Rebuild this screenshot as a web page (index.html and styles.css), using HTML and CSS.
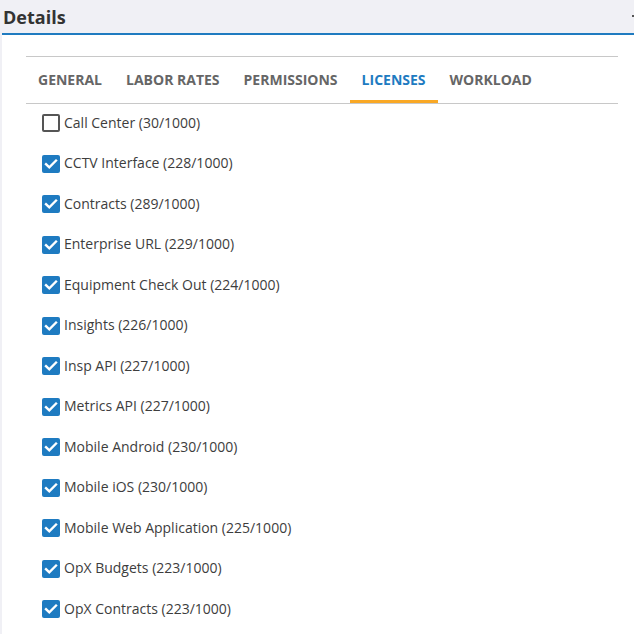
FILE: index.html
```html
<!DOCTYPE html>
<html>
<head>
<meta charset="utf-8">
<link rel="stylesheet" href="styles.css">
</head>
<body>
<div class="header">
  <h1 class="title">Details</h1>
  <span class="corner-icon"></span>
</div>
<div class="main">
  <div class="panel">
    <div class="tabs">
      <div class="tab">General</div>
      <div class="tab">Labor Rates</div>
      <div class="tab">Permissions</div>
      <div class="tab active">Licenses</div>
      <div class="tab">Workload</div>
    </div>
    <ul class="list">
      <li class="row"><span class="box"></span><span class="label">Call Center (30/1000)</span></li>
      <li class="row"><span class="box checked"><svg viewBox="0 0 18 18"><path d="M4 9.2l3.3 3.2L14 5.6"/></svg></span><span class="label">CCTV Interface (228/1000)</span></li>
      <li class="row"><span class="box checked"><svg viewBox="0 0 18 18"><path d="M4 9.2l3.3 3.2L14 5.6"/></svg></span><span class="label">Contracts (289/1000)</span></li>
      <li class="row"><span class="box checked"><svg viewBox="0 0 18 18"><path d="M4 9.2l3.3 3.2L14 5.6"/></svg></span><span class="label">Enterprise URL (229/1000)</span></li>
      <li class="row"><span class="box checked"><svg viewBox="0 0 18 18"><path d="M4 9.2l3.3 3.2L14 5.6"/></svg></span><span class="label">Equipment Check Out (224/1000)</span></li>
      <li class="row"><span class="box checked"><svg viewBox="0 0 18 18"><path d="M4 9.2l3.3 3.2L14 5.6"/></svg></span><span class="label">Insights (226/1000)</span></li>
      <li class="row"><span class="box checked"><svg viewBox="0 0 18 18"><path d="M4 9.2l3.3 3.2L14 5.6"/></svg></span><span class="label">Insp API (227/1000)</span></li>
      <li class="row"><span class="box checked"><svg viewBox="0 0 18 18"><path d="M4 9.2l3.3 3.2L14 5.6"/></svg></span><span class="label">Metrics API (227/1000)</span></li>
      <li class="row"><span class="box checked"><svg viewBox="0 0 18 18"><path d="M4 9.2l3.3 3.2L14 5.6"/></svg></span><span class="label">Mobile Android (230/1000)</span></li>
      <li class="row"><span class="box checked"><svg viewBox="0 0 18 18"><path d="M4 9.2l3.3 3.2L14 5.6"/></svg></span><span class="label">Mobile iOS (230/1000)</span></li>
      <li class="row"><span class="box checked"><svg viewBox="0 0 18 18"><path d="M4 9.2l3.3 3.2L14 5.6"/></svg></span><span class="label">Mobile Web Application (225/1000)</span></li>
      <li class="row"><span class="box checked"><svg viewBox="0 0 18 18"><path d="M4 9.2l3.3 3.2L14 5.6"/></svg></span><span class="label">OpX Budgets (223/1000)</span></li>
      <li class="row"><span class="box checked"><svg viewBox="0 0 18 18"><path d="M4 9.2l3.3 3.2L14 5.6"/></svg></span><span class="label">OpX Contracts (223/1000)</span></li>
    </ul>
  </div>
</div>
</body>
</html>
```
FILE: styles.css
```css
html, body {
  margin: 0;
  padding: 0;
  height: 100%;
  overflow: hidden;
}
body {
  background: #f0f0f5;
  font-family: "Open Sans", "Noto Sans", sans-serif;
  color: #3d3d3d;
  display: flex;
  flex-direction: column;
}
.header {
  height: 33px;
  flex: none;
  display: flex;
  align-items: center;
  justify-content: space-between;
  padding-left: 3px;
}
.title {
  margin: 0;
  font-size: 18px;
  font-weight: 700;
  color: #333;
  line-height: 24px;
  padding-top: 1px;
}
.corner-icon {
  width: 2px;
  height: 2px;
  background: #555;
  margin-bottom: 2px;
}
.main {
  flex: 1;
  min-height: 0;
  margin-left: 2px;
  background: #fff;
  border-top: 2px solid #1f7bc0;
  padding-top: 21px;
  overflow: hidden;
}
.panel {
  margin-left: 24px;
  width: 592px;
  border-top: 1px solid #c8c8c8;
}
.tabs {
  display: flex;
  height: 46px;
  border-bottom: 1px solid #c8c8c8;
}
.tab {
  padding: 0 12px;
  font-size: 14px;
  font-weight: 700;
  text-transform: uppercase;
  color: #666;
  line-height: 44px;
  border-bottom: 3px solid transparent;
  box-sizing: border-box;
  height: 46px;
  padding-top: 1px;
}
.tab.active {
  color: #1e7bc1;
  border-bottom-color: #f9a825;
}
.list {
  list-style: none;
  margin: 0;
  padding: 10px 0 0 16px;
  display: flex;
  flex-direction: column;
  gap: 22.5px;
}
.row {
  display: flex;
  align-items: center;
  height: 18px;
  gap: 4px;
  font-size: 14px;
  color: #3d3d3d;
}
.label {
  line-height: 18px;
  margin-top: -1px;
}
.box {
  width: 18px;
  height: 18px;
  box-sizing: border-box;
  border: 2px solid #555;
  border-radius: 2px;
  flex: none;
  display: flex;
}
.box.checked {
  border: none;
  background: #1e7bc1;
}
.box svg {
  width: 18px;
  height: 18px;
}
.box path {
  fill: none;
  stroke: #fff;
  stroke-width: 2.4;
  stroke-linecap: square;
}
```
